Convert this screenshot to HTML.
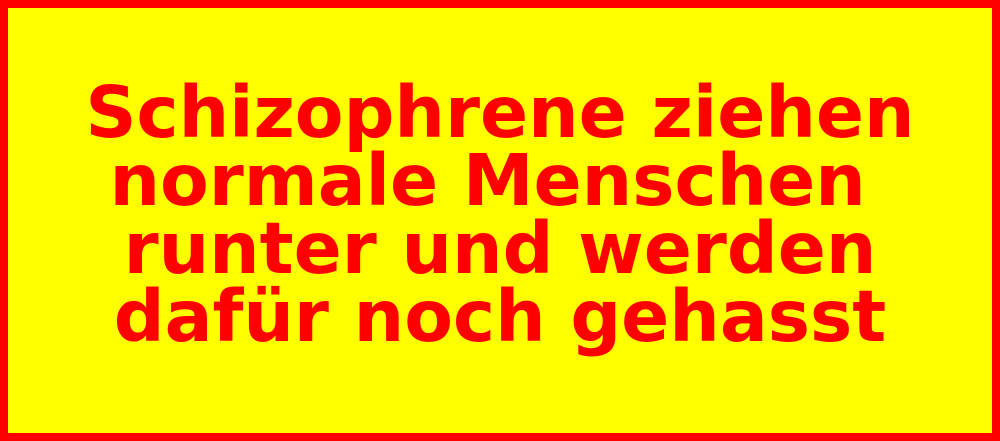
<!DOCTYPE html>
<html><head><meta charset="utf-8"><style>
html,body{margin:0;padding:0;}
body{width:1000px;height:441px;position:relative;overflow:hidden;background:#ff0;}
.b{position:absolute;left:0;top:0;width:1000px;height:441px;box-sizing:border-box;border:8px solid #f00;}
.t{position:absolute;left:0;top:79px;width:1000px;text-align:center;font-family:"DejaVu Sans",sans-serif;font-weight:bold;font-size:71px;line-height:68px;color:#f00;white-space:pre;}
</style></head><body>
<div class="b"></div>
<div class="t">Schizophrene ziehen
normale Menschen 
runter und werden
dafür noch gehasst</div>
</body></html>
